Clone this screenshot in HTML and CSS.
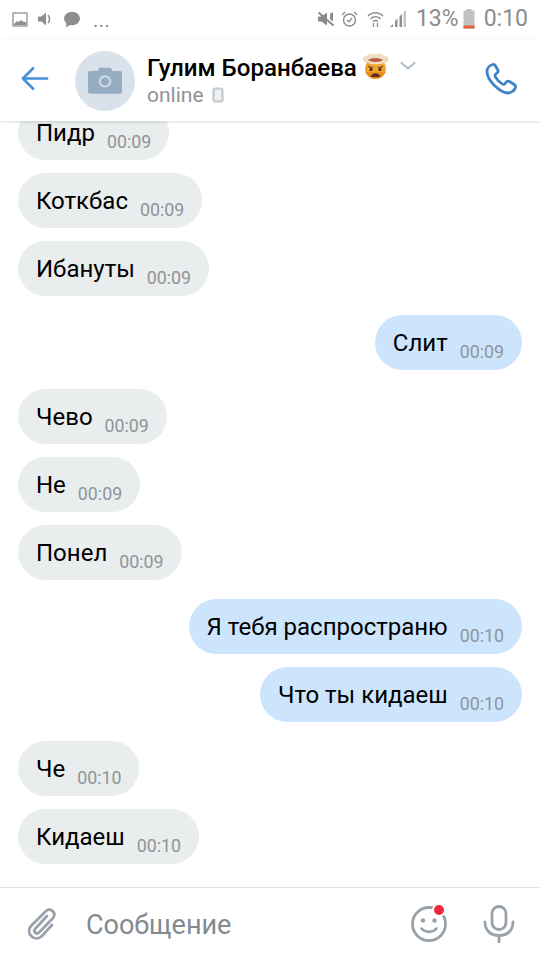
FILE: index.html
```html
<!DOCTYPE html>
<html lang="ru">
<head>
<meta charset="utf-8">
<title>Чат</title>
<link rel="stylesheet" href="styles.css">
</head>
<body>
<div class="app">
  <div class="status">
    <div class="status-left">
      <svg class="si" width="16" height="15" viewBox="0 0 16 15"><rect x="1" y="1" width="14" height="13" fill="#fff" stroke="#9a9a9a" stroke-width="1.4"/><path d="M2 12l3-3 2 1 2-2 3 2 2 0v3H2z" fill="#8f8f8f"/></svg>
      <svg class="si" width="17" height="16" viewBox="0 0 17 16"><path d="M1 5.500h3.500L9 1.500v13L4.500 10.500H1z" fill="#8e8e8e"/><path d="M11 4c2 2 2 6 0 8" fill="none" stroke="#8e8e8e" stroke-width="1.500"/></svg>
      <svg class="si" width="18" height="17" viewBox="0 0 18 17"><ellipse cx="9" cy="7.500" rx="8" ry="6.800" fill="#8e8e8e"/><path d="M3.500 11l-.5 5.500 5-3z" fill="#8e8e8e"/></svg>
      <span class="dots">...</span>
    </div>
    <div class="status-right">
      <svg width="18" height="16" viewBox="0 0 18 16"><path d="M1 5.500h3.500L10 1.500v13L4.500 10.500H1z" fill="#8a8a8a"/><path d="M1.500 1.500l15 13" stroke="#8a8a8a" stroke-width="2"/><path d="M13 3v5l3 2.500V1z" fill="#8a8a8a"/></svg>
      <svg class="alarm" width="17" height="18" viewBox="0 0 17 18"><circle cx="8.500" cy="10" r="6" fill="none" stroke="#8e8e8e" stroke-width="1.400"/><path d="M6 10l2 2 3-4M1 5l3-3M16 5l-3-3" fill="none" stroke="#8e8e8e" stroke-width="1.300"/></svg>
      <svg class="wifi" width="17" height="18" viewBox="0 0 17 18"><path d="M1 6c4-4.500 11-4.500 15 0M3.500 9c3-3 7-3 10 0M6 11.500c1.500-1.200 3.500-1.200 5 0" fill="none" stroke="#8e8e8e" stroke-width="1.500"/><path d="M6.500 13v4M10.500 13v4" stroke="#8e8e8e" stroke-width="1.300"/></svg>
      <svg class="sig" width="18" height="18" viewBox="0 0 18 18"><path d="M1 17l3-3v3zM6 17v-6l2.500-2.500V17zM10.500 17V6.500L13 4v13z" fill="#8e8e8e"/><path d="M14.500 17V2.500L17 0v17z" fill="#c4c4c4"/></svg>
      <span class="pct">13%</span>
      <svg class="batt" width="12" height="20" viewBox="0 0 12 20"><rect x="3.500" y="0" width="5" height="2" fill="#c0c0c0"/><rect x="0.500" y="1.500" width="11" height="18" fill="#c2c2c2"/><rect x="0.500" y="16.500" width="11" height="3" fill="#e2603f"/></svg>
      <span class="time">0:10</span>
    </div>
  </div>

  <header class="head">
    <svg class="back" width="28" height="25" viewBox="0 0 30 26"><path d="M13 2L2 13l11 11M2 13h26" fill="none" stroke="#4a90d9" stroke-width="2.800" stroke-linecap="round" stroke-linejoin="round"/></svg>
    <div class="avatar">
      <svg width="34" height="27" viewBox="0 0 36 28"><path d="M2 4h8l2-3.500h12L26 4h8a2 2 0 0 1 2 2v20a2 2 0 0 1-2 2H2a2 2 0 0 1-2-2V6a2 2 0 0 1 2-2z" fill="#95adc3"/><circle cx="18" cy="15" r="6.500" fill="#d5dfe8"/><circle cx="18" cy="15" r="4.500" fill="#95adc3"/></svg>
    </div>
    <div class="who">
      <div class="name-row">
        <span class="name">Гулим Боранбаева</span>
        <svg class="emoji" width="27" height="27" viewBox="0 0 27 27"><circle cx="13.500" cy="15.500" r="10.500" fill="#f2a32c"/><path d="M3 18c2 5 6 8 10.500 8S22 23 24 18c-3 2-18 2-21 0z" fill="#e98a1e"/><path d="M1 6C1 3 4 3 6 2c2-2 5-1 7.500-1s6-1 8 1c2 1 5 1 5 4 0 3-2 4-4 3.500-2 2.500-15 2.500-17 0C4 10 1 9 1 6z" fill="#f0dcc0"/><path d="M6 7c3-2.500 12-2.500 15 0-3 2.500-12 2.500-15 0z" fill="#b9583c"/><path d="M6 13.500l5 1.500M21 13.500l-5 1.500" stroke="#5b3a1c" stroke-width="1.300"/><circle cx="9" cy="16.500" r="1.500" fill="#3f2a16"/><circle cx="18" cy="16.500" r="1.500" fill="#3f2a16"/><path d="M9 24c0-5 9-5 9 0z" fill="#5a2f1a"/></svg>
        <svg class="chev" width="16" height="10" viewBox="0 0 16 10"><path d="M1.500 2l6.500 5.500L14.500 2" fill="none" stroke="#b4bfca" stroke-width="2.200" stroke-linecap="round" stroke-linejoin="round"/></svg>
      </div>
      <div class="online">online
        <svg width="12" height="16" viewBox="0 0 12 16"><rect x="1.500" y="1.500" width="9" height="13" rx="2" fill="#eef0f2" stroke="#c4c9ce" stroke-width="2.200"/></svg>
      </div>
    </div>
    <svg class="call" width="34" height="34" viewBox="0 0 34 34"><path d="M9 2.500c-3 .8-6 3.500-6 7 0 5.500 3.500 10 7.500 14s8.500 7 13 7.500c3.500.3 7-2.500 8-5.500.4-1.400-.2-2.300-1.300-3l-4.700-3c-1.200-.7-2.200-.5-3 .4l-1.500 1.800c-.7.800-1.500.9-2.400.4-2.800-1.600-5.800-4.500-7.400-7.500-.5-.9-.3-1.600.4-2.300l1.700-1.600c.9-.8 1-1.900.4-3l-2.700-4.500c-.5-.8-1-1-1.900-.7z" fill="none" stroke="#3f83c9" stroke-width="2.800" stroke-linejoin="round"/></svg>
  </header>

  <main class="msgs">
    <div class="msg in"><span class="t">Пидр</span><span class="d">00:09</span></div>
    <div class="msg in"><span class="t">Коткбас</span><span class="d">00:09</span></div>
    <div class="msg in"><span class="t">Ибануты</span><span class="d">00:09</span></div>
    <div class="msg out turn"><span class="t">Слит</span><span class="d">00:09</span></div>
    <div class="msg in turn"><span class="t">Чево</span><span class="d">00:09</span></div>
    <div class="msg in"><span class="t">Не</span><span class="d">00:09</span></div>
    <div class="msg in"><span class="t">Понел</span><span class="d">00:09</span></div>
    <div class="msg out turn"><span class="t">Я тебя распространю</span><span class="d">00:10</span></div>
    <div class="msg out"><span class="t">Что ты кидаеш</span><span class="d">00:10</span></div>
    <div class="msg in turn"><span class="t">Че</span><span class="d">00:10</span></div>
    <div class="msg in"><span class="t">Кидаеш</span><span class="d">00:10</span></div>
  </main>

  <footer class="composer">
    <svg class="clip" width="32" height="36" viewBox="0 0 32 36"><path d="M21 10L9 23c-2 2.500 1.500 6 4 3.500L27 12c4-5-2.500-11-7-7L5 20c-6 7 3.500 17 11 10l10-11" fill="none" stroke="#99a2aa" stroke-width="2.800" stroke-linecap="round"/></svg>
    <span class="ph">Сообщение</span>
    <div class="smile">
      <svg width="38" height="38" viewBox="0 0 38 38"><circle cx="19" cy="19" r="16.500" fill="none" stroke="#99a2aa" stroke-width="2.800"/><circle cx="13" cy="15.500" r="2.200" fill="#99a2aa"/><circle cx="24.500" cy="15.500" r="2.200" fill="#99a2aa"/><path d="M11.500 23.500c4 4.500 11 4.500 15 0" fill="none" stroke="#99a2aa" stroke-width="2.600" stroke-linecap="round"/></svg>
      <span class="dot"></span>
    </div>
    <svg class="mic" width="32" height="38" viewBox="0 0 32 38"><rect x="9" y="1.500" width="14" height="23" rx="7" fill="none" stroke="#99a2aa" stroke-width="2.800"/><path d="M2 17c0 9 6 13.500 14 13.500S30 26 30 17M16 30.500V37" fill="none" stroke="#99a2aa" stroke-width="2.800" stroke-linecap="round"/></svg>
  </footer>
</div>
</body>
</html>
```
FILE: styles.css
```css
* { box-sizing: border-box; }
html, body { margin: 0; padding: 0; }
body { background: #fff; font-family: Roboto, "Liberation Sans", sans-serif; }
.app { width: 540px; height: 960px; display: flex; flex-direction: column; overflow: hidden; background: #fff; }

.status { height: 40px; flex: none; display: flex; justify-content: space-between; align-items: center; padding: 0 12px 2px 12px; color: #8a8a8a; }
.status-left { display: flex; align-items: center; gap: 9px; }
.status-left .si { display: block; }
.dots { font-size: 20px; line-height: 20px; letter-spacing: 0.5px; margin: 0 0 -2px 3px; }
.status-right { display: flex; align-items: center; gap: 6px; }
.alarm { margin-left: 0; }
.wifi { margin-left: 3px; }
.sig { margin-left: -1px; }
.pct, .time { font-size: 23px; line-height: 26px; color: #8c8c8c; }
.pct { margin-left: 3px; }
.batt { margin-left: -2px; }
.time { margin-left: 3px; }

.head { height: 81px; flex: none; position: relative; z-index: 2; display: flex; align-items: center; padding: 0 22px 0 21px; background: #fff; box-shadow: 0 1px 3px rgba(0,0,0,.14); }
.back { flex: none; margin-top: -4px; }
.avatar { width: 60px; height: 60px; flex: none; border-radius: 50%; background: #d9e2ea; display: flex; align-items: center; justify-content: center; margin: 0 12px 0 26px; }
.who { flex: 1; min-width: 0; display: flex; flex-direction: column; gap: 1px; }
.name-row { display: flex; align-items: center; }
.name { font-size: 24.100px; line-height: 28px; font-weight: 500; color: #000; white-space: nowrap; }
.emoji { margin-left: 5px; margin-top: -2px; }
.chev { margin-left: 11px; margin-top: -4px; }
.online { display: flex; align-items: center; gap: 8px; font-size: 21px; line-height: 25px; color: #909399; }
.call { flex: none; margin-top: -4px; }

.msgs { flex: 1; min-height: 0; overflow: hidden; display: flex; flex-direction: column; justify-content: flex-end; gap: 13px; padding: 0 18px 23px; }
.msg { flex: none; height: 55px; border-radius: 27.500px; display: flex; padding: 0 18px; color: #000; }
.msg.in { align-self: flex-start; background: #e9edee; }
.msg.out { align-self: flex-end; background: #cde4fd; }
.msg.turn { margin-top: 6px; }
.t { font-size: 24px; line-height: 57px; }
.d { font-size: 17.800px; line-height: 20px; color: #8f9499; margin-left: 12px; margin-top: 27px; }

.composer { height: 73px; flex: none; display: flex; align-items: center; border-top: 1px solid #e1e3e6; padding: 0 25px 0 26px; background: #fff; }
.clip { flex: none; }
.ph { flex: 1; font-size: 27px; line-height: 34px; padding-top: 2px; color: #828a92; margin-left: 28px; }
.smile { position: relative; width: 38px; height: 38px; flex: none; margin-right: 35px; }
.smile svg { display: block; }
.dot { position: absolute; top: 0; left: 24px; width: 10px; height: 10px; border-radius: 50%; background: #f2263f; box-shadow: 0 0 0 2px #fff; }
.mic { flex: none; }
```
